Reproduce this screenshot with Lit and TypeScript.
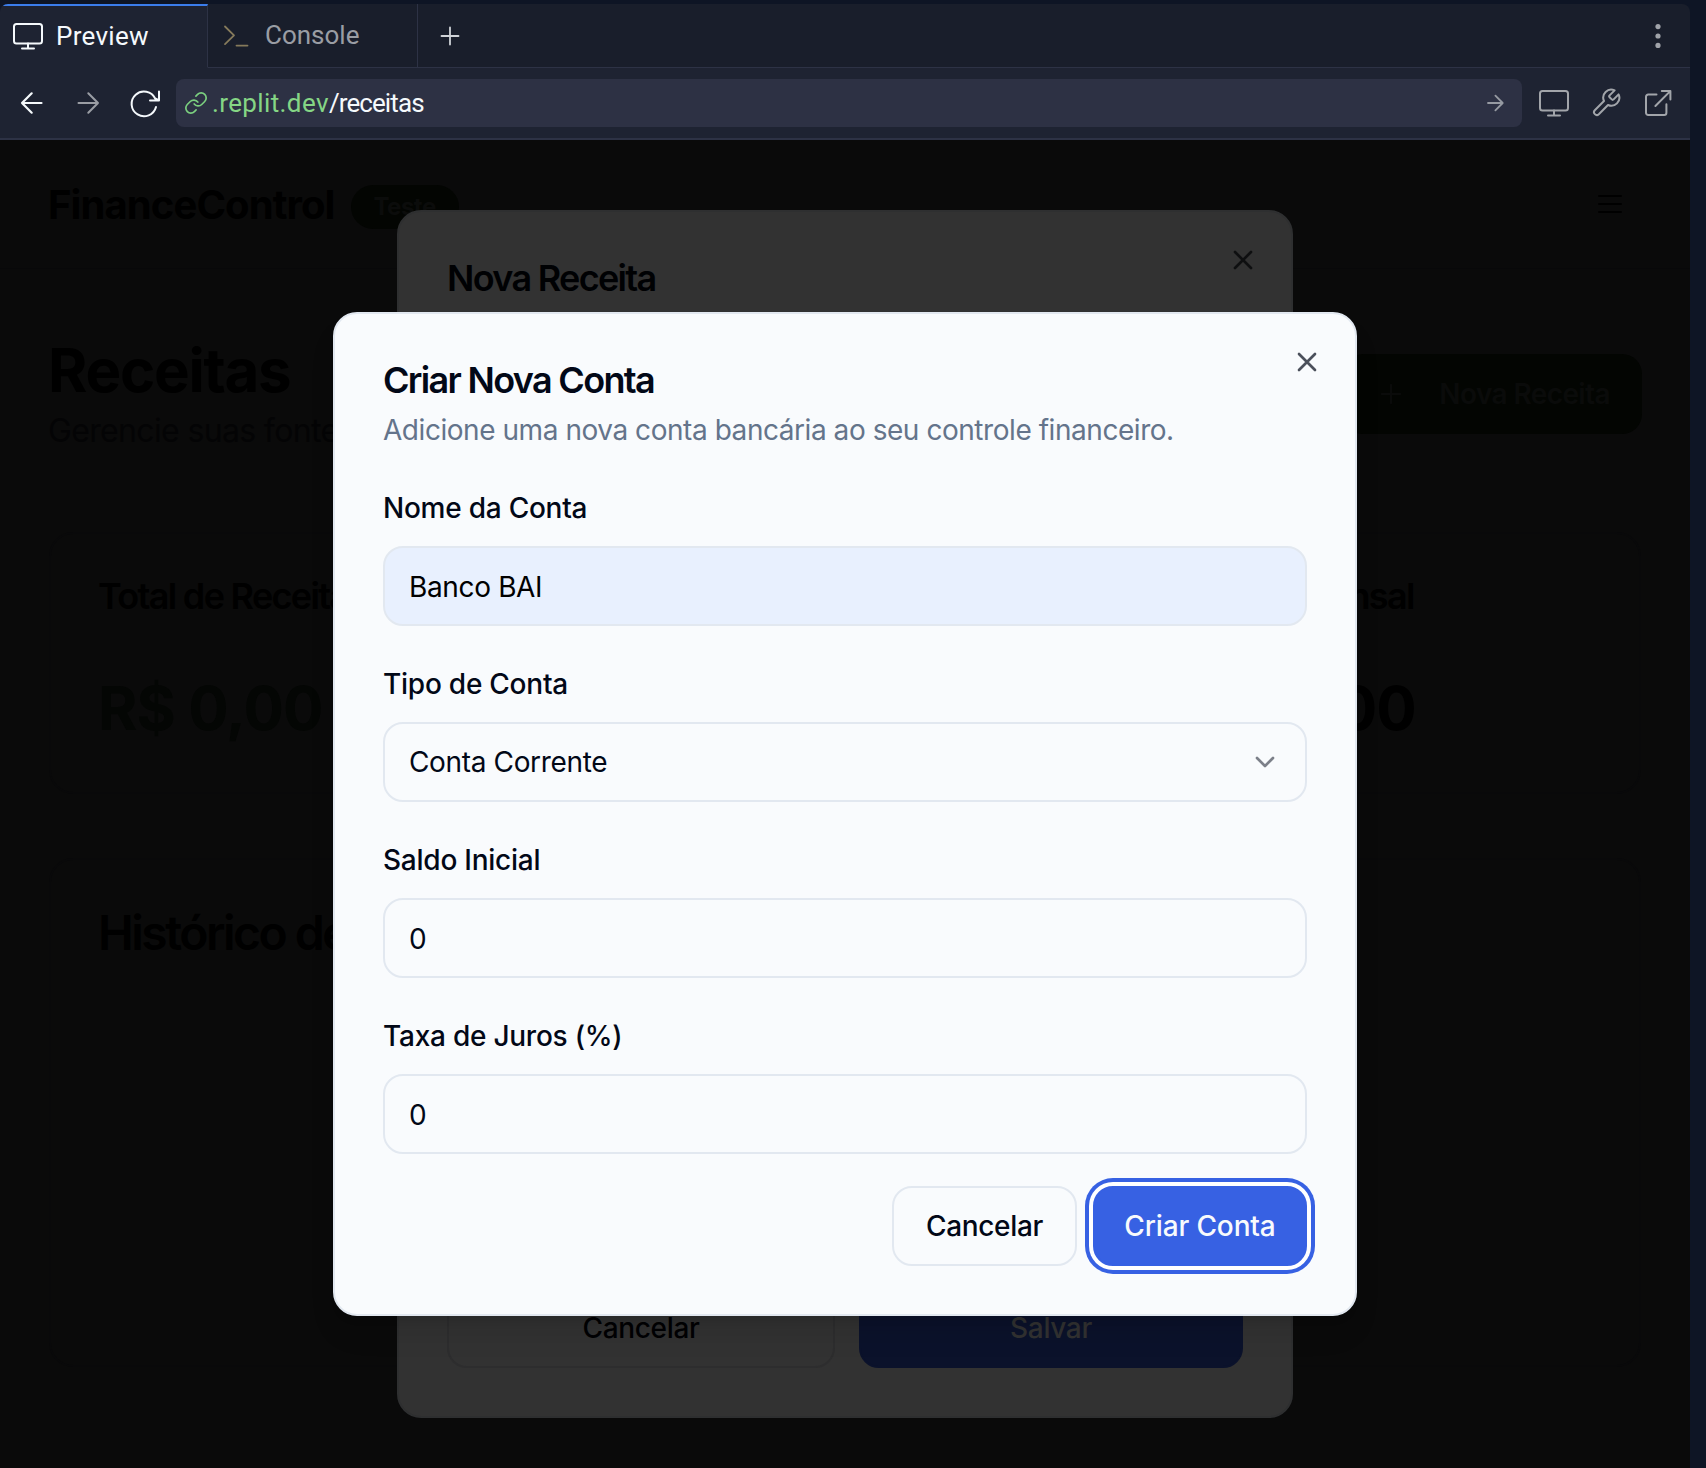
import { LitElement, html, css, svg, nothing } from "lit";
import { customElement, property } from "lit/decorators.js";

const icon = (body: unknown, size = 32, width = 2) => html`
  <svg width=${size} height=${size} viewBox="0 0 ${size} ${size}" fill="none" stroke="currentColor" stroke-width=${width}
    stroke-linecap="round" stroke-linejoin="round" style="display:block;flex:none">${body}</svg>`;

const monitor = svg`<rect x="2" y="4" width="28" height="19.4" rx="2.5"/><path d="M16 23.4v5M10 28.6h12"/>`;
const prompt = svg`<path d="M2 4.5l9 8.8-9 8.8M13.5 23.6h11"/>`;
const plus = svg`<path d="M10 1.5v17M1.5 10h17"/>`;
const dots = svg`<g fill="currentColor" stroke="none"><circle cx="16" cy="6.6" r="2.6"/><circle cx="16" cy="16" r="2.6"/><circle cx="16" cy="25.4" r="2.6"/></g>`;
const arrowLeft = svg`<path d="M25.5 16H6M15.7 6.3L6 16l9.7 9.7"/>`;
const arrowRight = svg`<path d="M6.5 16H26M16.3 6.3L26 16l-9.7 9.7"/>`;
const reload = svg`<path d="M28 20a12.4 12.4 0 1 1 -0.8 -8.5L30.2 13M31 4.6v9h-9"/>`;
const chain = svg`<path d="M10.2 13a5 5 0 0 0 7.5.5l3-3a5 5 0 0 0-7.1-7.1l-1.7 1.7"/><path d="M13.8 11a5 5 0 0 0-7.5-.5l-3 3a5 5 0 0 0 7.1 7.1l1.7-1.7"/>`;
const go = svg`<path d="M1 9h14.5M8.4 1.7L15.7 9l-7.3 7.3"/>`;
const wrench = svg`<path d="M19.6 8.4a1.33 1.33 0 0 0 0 1.87l2.13 2.13a1.33 1.33 0 0 0 1.87 0l5-5a8 8 0 0 1-10.6 10.6l-9.2 9.2a2.83 2.83 0 0 1-4-4l9.2-9.2a8 8 0 0 1 10.6-10.6z"/>`;
const external = svg`<path d="M14.5 7.6H6.2a2.2 2.2 0 0 0-2.2 2.2v16a2.2 2.2 0 0 0 2.2 2.2h16a2.2 2.2 0 0 0 2.2-2.2v-8.6M19.8 4h8.6v8.6M28 4.4L13.4 19"/>`;
const cross = svg`<path d="M24 8L8 24M8 8l16 16"/>`;
const chevron = svg`<path d="M8 12l8 8 8-8"/>`;
const burger = svg`<path d="M5 8h22M5 16h22M5 24h22"/>`;
const addSign = svg`<path d="M6.7 16h18.6M16 6.7v18.6"/>`;

@customElement("preview-chrome")
export class PreviewChrome extends LitElement {
  static styles = css`
    :host { display: block; font: 400 26px/32px Roboto, "Liberation Sans", sans-serif; color: #f5f9fc; }
    .tabs { display: flex; height: 64px; background: #191e2b; border-radius: 8px 8px 0 0; overflow: hidden; }
    .tab { display: flex; align-items: center; box-sizing: border-box; border-bottom: 1px solid #2d3245; border-right: 1px solid #2d3245; }
    .active { width: 208px; background: #1e2332; border-top: 2px solid #3b7deb; border-bottom-color: #1e2332; padding: 0 0 2px 12px; gap: 12px; letter-spacing: .28px; }
    .console { width: 210px; padding: 0 0 1px 15px; gap: 12px; color: #9a9da4; }
    .console .glyph { color: #857a5b; padding-top: 3px; }
    .rest { flex: 1; display: flex; justify-content: space-between; align-items: center; box-sizing: border-box; border-bottom: 1px solid #2d3245; padding: 0 16px 0 22px; color: #a0a3a9; }
    .rest .add { color: #d0d3d8; }
    .bar { display: flex; align-items: center; box-sizing: border-box; height: 72px; padding: 0 16px 0 16px; background: #1e2332; border-bottom: 2px solid #2d3245; color: #a2a5aa; }
    .back, .reload { color: #f5f9fc; }
    .fwd { margin-left: 24px; color: #9a9da4; }
    .reload { margin-left: 24px; }
    .url { flex: 1; display: flex; align-items: center; box-sizing: border-box; height: 48px; margin: 0 16px; padding: 0 17px 0 8px; border-radius: 8px; background: #2d3144; }
    .url .link { color: #7bcf7f; }
    .host { color: #85d685; margin-left: 4px; letter-spacing: .38px; }
    .path { color: #f5f9fc; letter-spacing: -.9px; flex: 1; }
    .url .go { color: #969aa2; }
    .tools { display: flex; gap: 20px; }
  `;
  render() {
    return html`
      <div class="tabs">
        <div class="tab active">${icon(monitor)}<span>Preview</span></div>
        <div class="tab console"><span class="glyph">${icon(prompt, 30, 1.8)}</span><span>Console</span></div>
        <div class="rest"><span class="add">${icon(plus, 20, 1.8)}</span>${icon(dots)}</div>
      </div>
      <div class="bar">
        <span class="back">${icon(arrowLeft, 32, 2.2)}</span>
        <span class="fwd">${icon(arrowRight)}</span>
        <span class="reload">${icon(reload)}</span>
        <div class="url">
          <span class="link">${icon(chain, 24, 1.7)}</span>
          <span class="host">.replit.dev</span><span class="path">/receitas</span>
          <span class="go">${icon(go, 18, 1.8)}</span>
        </div>
        <div class="tools">${icon(monitor)}${icon(wrench)}${icon(external)}</div>
      </div>`;
  }
}

@customElement("receitas-page")
export class ReceitasPage extends LitElement {
  static styles = css`
    :host { display: flex; flex-direction: column; height: 1328px; background: #0a0a0a; color: #000; font-family: Inter, "Liberation Sans", sans-serif; overflow: hidden; }
    .top { display: flex; align-items: center; box-sizing: border-box; height: 129px; padding: 0 64px 0 48px; border-bottom: 1px solid #080809; }
    .brand { font: 700 40px/56px Inter, sans-serif; letter-spacing: -.9px; padding-top: 2px; }
    .badge { margin: 6px auto 0 17px; box-sizing: border-box; height: 44px; width: 108px; border-radius: 22px; background: #030502; color: #0b0c0b; font: 700 24px/40px Inter, sans-serif; letter-spacing: -.5px; padding: 2px 0 0 22px; }
    .intro { display: flex; justify-content: space-between; align-items: center; margin-top: 64px; padding: 0 48px; height: 122px; }
    h1 { margin: 0; font: 700 60px/72px Inter, sans-serif; letter-spacing: -1.26px; }
    .sub { margin: 0; font: 400 32px/50px Inter, sans-serif; height: 48px; letter-spacing: -.65px; color: #040405; white-space: nowrap; }
    .new { display: flex; align-items: center; box-sizing: border-box; height: 80px; border-radius: 20px; background: #030502; color: #0a0b0a; font: 600 28px/40px Inter, sans-serif; letter-spacing: -.6px; padding: 0 32px; gap: 32px; }
    .stats { display: grid; grid-template-columns: repeat(3, 1fr); gap: 48px; margin: 77px 49px 0; }
    .card { box-sizing: border-box; border: 2px solid #09090a; border-radius: 24px; padding: 48px 47px; }
    .stats .card { height: 262px; padding-top: 44px; }
    h3 { margin: 0; font: 600 36px/36px Inter, sans-serif; letter-spacing: -1.68px; white-space: nowrap; }
    .value { font: 700 60px/72px Inter, sans-serif; letter-spacing: -.9px; margin-top: 58px; }
    .income { color: #040604; }
    .history { margin: 64px 49px 0; height: 509px; padding-top: 49px; }
    h2 { margin: 0; font: 600 48px/48px Inter, sans-serif; letter-spacing: -2.5px; }
  `;
  render() {
    const stats = [["Total de Receitas", "income"], ["Receitas Fixas", ""], ["Média Mensal", ""]];
    return html`
      <header class="top"><span class="brand">FinanceControl</span><span class="badge">Teste</span>${icon(burger)}</header>
      <section class="intro">
        <div><h1>Receitas</h1><p class="sub">Gerencie suas fontes</p></div>
        <div class="new">${icon(addSign)}<span>Nova Receita</span></div>
      </section>
      <section class="stats">${stats.map(([name, kind]) => html`
        <div class="card"><h3>${name}</h3><div class="value ${kind}">R$ 0,00</div></div>`)}
      </section>
      <section class="card history"><h2>Histórico de</h2></section>`;
  }
}

@customElement("form-field")
export class FormField extends LitElement {
  @property() label = "";
  @property() value = "";
  @property() kind = "text";
  static styles = css`
    :host { display: block; font-family: Inter, "Liberation Sans", sans-serif; color: #020817; }
    .label { height: 48px; margin-bottom: 16px; font-size: 28px; font-weight: 500; line-height: 52px; letter-spacing: -.24px; }
    .box { display: flex; align-items: center; justify-content: space-between; box-sizing: border-box; height: 80px; padding: 2px 24px 0; border: 2px solid #e2e8f0; border-radius: 20px; font-size: 28px; letter-spacing: -.35px; }
    .filled { background: #e8f0fe; color: #000; }
    .select { padding-top: 0; }
    .arrow { opacity: .5; }
  `;
  render() {
    return html`<div class="label">${this.label}</div>
      <div class="box ${this.kind}"><span>${this.value}</span>
        ${this.kind === "select" ? html`<span class="arrow">${icon(chevron, 32, 2.67)}</span>` : nothing}</div>`;
  }
}

@customElement("app-root")
export class AppRoot extends LitElement {
  static styles = css`
    :host { display: block; width: 1706px; height: 1468px; overflow: hidden; position: relative; background: #0e1525; font-family: Inter, "Liberation Sans", sans-serif; }
    .pane { width: 1690px; padding-top: 4px; }
    .dialog { position: absolute; box-sizing: border-box; border-radius: 24px; padding: 48px; display: flex; flex-direction: column; }
    .back { left: 397px; top: 210px; width: 896px; height: 1208px; background: #323232; border: 2px solid #2e2f30; color: #000103; justify-content: space-between; }
    .front { left: 333px; top: 312px; width: 1024px; height: 1004px; background: #f9fbfd; border: 2px solid #e2e8f0; color: #020817; box-shadow: 0 20px 30px -6px rgba(0,0,0,.12), 0 8px 12px -8px rgba(0,0,0,.12); }
    .close { position: absolute; top: 32px; right: 32px; opacity: .7; }
    .title { margin: 0; font-size: 36px; line-height: 36px; font-weight: 600; letter-spacing: -1.68px; }
    .note { margin: 12px 0 32px; font-size: 28px; line-height: 40px; color: #64748b; letter-spacing: -.45px; white-space: nowrap; }
    .fields { display: grid; gap: 32px; }
    .actions { display: flex; justify-content: flex-end; gap: 16px; margin-top: 32px; }
    .btn { display: flex; align-items: center; justify-content: center; box-sizing: border-box; height: 80px; border-radius: 20px; font-size: 28px; font-weight: 500; letter-spacing: -.35px; border: 2px solid #e2e8f0; }
    .cancel { width: 185px; }
    .create { width: 214px; background: #3761e3; border-color: #3761e3; color: #f8fafc; letter-spacing: -.14px; box-shadow: 0 0 0 4px #fff, 0 0 0 8px #3761e3; }
    .pair { display: grid; grid-template-columns: 388px 384px; gap: 24px; }
    .dim { border-color: #2d2d2e; }
    .save { background: #0b122b; border-color: #0b122b; color: #323232; }
  `;
  render() {
    return html`
      <div class="pane"><preview-chrome></preview-chrome><receitas-page></receitas-page></div>
      <div class="dialog back">
        <h2 class="title">Nova Receita</h2>
        <span class="close">${icon(cross, 32, 2.67)}</span>
        <div class="pair"><div class="btn dim">Cancelar</div><div class="btn save">Salvar</div></div>
      </div>
      <div class="dialog front">
        <h2 class="title">Criar Nova Conta</h2>
        <span class="close">${icon(cross, 32, 2.67)}</span>
        <p class="note">Adicione uma nova conta bancária ao seu controle financeiro.</p>
        <div class="fields">
          <form-field label="Nome da Conta" value="Banco BAI" kind="filled"></form-field>
          <form-field label="Tipo de Conta" value="Conta Corrente" kind="select"></form-field>
          <form-field label="Saldo Inicial" value="0"></form-field>
          <form-field label="Taxa de Juros (%)" value="0"></form-field>
        </div>
        <div class="actions"><div class="btn cancel">Cancelar</div><div class="btn create">Criar Conta</div></div>
      </div>`;
  }
}
